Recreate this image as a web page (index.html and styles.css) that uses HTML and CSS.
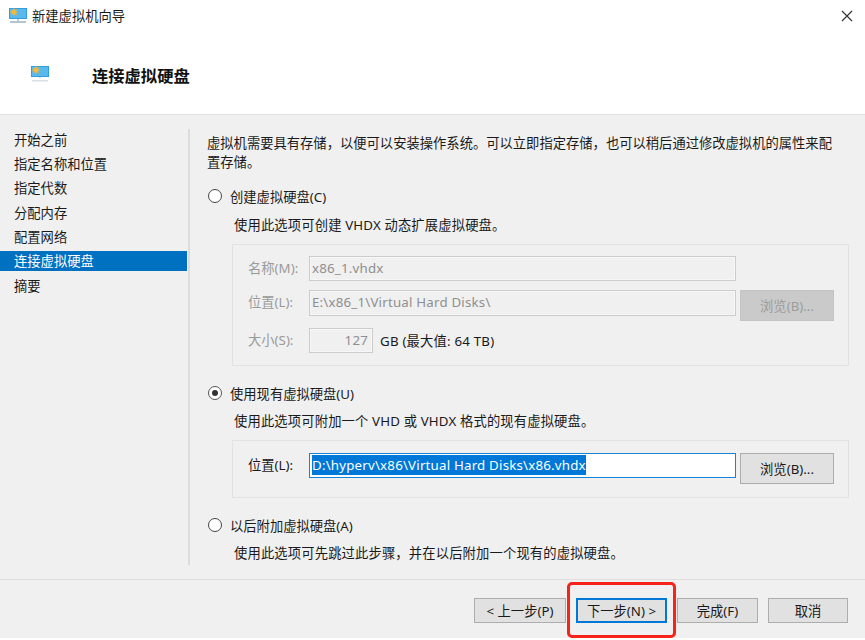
FILE: index.html
```html
<!DOCTYPE html>
<html lang="zh-CN">
<head>
<meta charset="utf-8">
<title>新建虚拟机向导</title>
<link rel="stylesheet" href="styles.css">
</head>
<body>
<div class="window">
  <div class="titlebar">
    <svg class="monitor" viewBox="0 0 18 16" width="18" height="16"><rect x="0" y="0" width="18" height="11" fill="#2f9fe0"/><rect x="1" y="1" width="16" height="9" fill="#5cb8ea"/><circle cx="5" cy="4" r="2.6" fill="#f5b93a"/><path d="M5 0v8M1 4h8M2.2 1.2l5.6 5.6M7.8 1.2L2.2 6.800" stroke="#f5b93a" stroke-width=".8"/><rect x="8" y="11" width="2" height="2" fill="#bcd0dc"/><rect x="1" y="13" width="16" height="2" fill="#b8c4cc"/></svg>
    <span class="title">新建虚拟机向导</span>
    <svg class="close" viewBox="0 0 12 12" width="12" height="12"><path d="M1 1l10 10M11 1L1 11" stroke="#333" stroke-width="1.200"/></svg>
  </div>
  <div class="header">
    <svg class="monitor" viewBox="0 0 18 16" width="18" height="16"><rect x="0" y="0" width="18" height="11" fill="#2f9fe0"/><rect x="1" y="1" width="16" height="9" fill="#5cb8ea"/><circle cx="5" cy="4" r="2.6" fill="#f5b93a"/><path d="M5 0v8M1 4h8M2.2 1.2l5.6 5.6M7.8 1.2L2.2 6.800" stroke="#f5b93a" stroke-width=".8"/><rect x="8" y="11" width="2" height="1" fill="#c8d8e0"/><rect x="1" y="14" width="16" height="1.500" fill="#d8e0e4"/></svg>
    <h1>连接虚拟硬盘</h1>
  </div>
  <div class="main">
    <ul class="nav">
      <li>开始之前</li>
      <li>指定名称和位置</li>
      <li>指定代数</li>
      <li>分配内存</li>
      <li>配置网络</li>
      <li class="active">连接虚拟硬盘</li>
      <li>摘要</li>
    </ul>
    <div class="content">
      <p class="intro">虚拟机需要具有存储，以便可以安装操作系统。可以立即指定存储，也可以稍后通过修改虚拟机的属性来配置存储。</p>
      <div class="option opt-first"><span class="radio"></span><span>创建虚拟硬盘(C)</span></div>
      <p class="desc desc-first">使用此选项可创建 VHDX 动态扩展虚拟硬盘。</p>
      <div class="group group-disabled">
        <div class="row"><label>名称(M):</label><div class="input disabled wide">x86_1.vhdx</div></div>
        <div class="row row-loc"><label>位置(L):</label><div class="input disabled wide tall">E:\x86_1\Virtual Hard Disks\</div><button class="btn browse" disabled>浏览(B)...</button></div>
        <div class="row row-size"><label>大小(S):</label><div class="input disabled size">127</div><span class="unit">GB (最大值: 64 TB)</span></div>
      </div>
      <div class="option opt-second"><span class="radio checked"></span><span>使用现有虚拟硬盘(U)</span></div>
      <p class="desc">使用此选项可附加一个 VHD 或 VHDX 格式的现有虚拟硬盘。</p>
      <div class="group group-active">
        <div class="row"><label>位置(L):</label><div class="input focus wide"><span class="sel">D:\hyperv\x86\Virtual Hard Disks\x86.vhdx</span></div><button class="btn browse">浏览(B)...</button></div>
      </div>
      <div class="option opt-third"><span class="radio"></span><span>以后附加虚拟硬盘(A)</span></div>
      <p class="desc">使用此选项可先跳过此步骤，并在以后附加一个现有的虚拟硬盘。</p>
    </div>
  </div>
  <div class="footer">
    <button class="btn back">&lt; 上一步(P)</button>
    <button class="btn next">下一步(N) &gt;</button>
    <button class="btn finish">完成(F)</button>
    <button class="btn cancel">取消</button>
  </div>
  <div class="highlight"></div>
</div>
</body>
</html>
```
FILE: styles.css
```css
* { box-sizing: border-box; }
html, body { margin: 0; padding: 0; }
body {
  width: 865px;
  height: 640px;
  overflow: hidden;
  background: #fff;
  font-family: "Noto Sans", "Noto Sans CJK SC", sans-serif;
  font-size: 13.3px;
  color: #1a1a1a;
}
.window { position: relative; width: 865px; height: 640px; display: flex; flex-direction: column; }
.titlebar { height: 32px; display: flex; align-items: center; padding: 0 12px 0 9px; flex: none; }
.title { margin-left: 5px; line-height: 16px; }
.close { margin-left: auto; }
.header { height: 83px; flex: none; display: flex; align-items: center; padding: 1px 0 0 31px; background: #fff; border-bottom: 1px solid #e2e2e2; }
.header h1 { margin: 4px 0 0 43px; font-size: 16.3px; font-weight: 700; line-height: 22px; color: #111; }
.main { height: 465px; flex: none; display: flex; background: #f0f0f0; border-bottom: 1px solid #dedede; }
.nav { list-style: none; margin: 14px 0; padding: 0; width: 190px; flex: none; border-right: 2px solid #dcdcdc; height: 436px; }
.nav li { height: 24.2px; line-height: 22px; padding-left: 14px; margin-right: 1px; }
.nav li.active { background: #0070c0; color: #fff; height: 20px; line-height: 20px; margin: 1px 1px 4px 0; }
.content { flex: 1; padding: 19px 17px 0 17px; min-width: 0; }
.intro { margin: 0; padding-right: 10px; line-height: 19px; }
.option { display: flex; align-items: center; height: 20px; gap: 8px; margin-left: 1px; }
.opt-first { margin-top: 14px; }
.opt-second { margin-top: 17px; }
.opt-third { margin-top: 17px; }
.radio { width: 14px; height: 14px; border-radius: 50%; border: 1px solid #444; background: #fff; flex: none; position: relative; }
.radio.checked { border-color: #555; }
.radio.checked::after { content: ""; position: absolute; left: 3px; top: 3px; width: 6px; height: 6px; border-radius: 50%; background: #333; }
.desc { margin: 9px 0 0 27px; line-height: 19px; letter-spacing: .15px; }
.desc-first { margin-top: 10px; }
.group { margin: 9px 0 0 25px; width: 617px; border: 1px solid #e2e2e2; }
.group-disabled { height: 122px; padding: 11px 0 0 15px; color: #9a9a9a; }
.group-active { height: 58px; padding: 12px 0 0 15px; }
.row { display: flex; align-items: flex-start; }
.row-loc { margin-top: 9px; }
.row-size { margin-top: 7px; }
.row label { width: 61px; flex: none; line-height: 25px; }
.input { height: 25px; line-height: 23px; padding: 0 2px; border: 1px solid #ccc; white-space: nowrap; overflow: hidden; letter-spacing: .2px; }
.tall { height: 26px; }
.wide { width: 427px; }
.disabled { background: #f0f0f0; color: #8f8f8f; box-shadow: inset 0 0 0 1px #f7f7f7; }
.size { width: 64px; text-align: right; padding-right: 4px; }
.unit { margin-left: 7px; line-height: 27px; color: #1a1a1a; letter-spacing: .2px; }
.focus { background: #fff; border-color: #1583d8; }
.sel { background: #0078d7; color: #fff; display: block; width: max-content; line-height: 20px; height: 20px; margin-top: 1px; }
.btn { font: inherit; color: #1a1a1a; background: #e1e1e1; border: 1px solid #adadad; height: 25px; padding: 0; }
.browse { width: 94px; height: 31px; margin-left: 4px; }
.browse[disabled] { background: #cacaca; border-color: #c4c4c4; color: #9c9c9c; }
.footer { flex: 1; background: #f0f0f0; display: flex; align-items: flex-start; padding: 18px 0 0 474px; border-bottom: 2px solid #fff; }
.back { width: 92px; }
.next { width: 91px; margin-left: 10px; border: 2px solid #0078d7; }
.finish { width: 81px; margin-left: 10px; }
.cancel { width: 80px; margin-left: 10px; }
.highlight { position: absolute; left: 567px; top: 582px; width: 109px; height: 56px; border: 3px solid #f5231c; border-radius: 5px; }
```
